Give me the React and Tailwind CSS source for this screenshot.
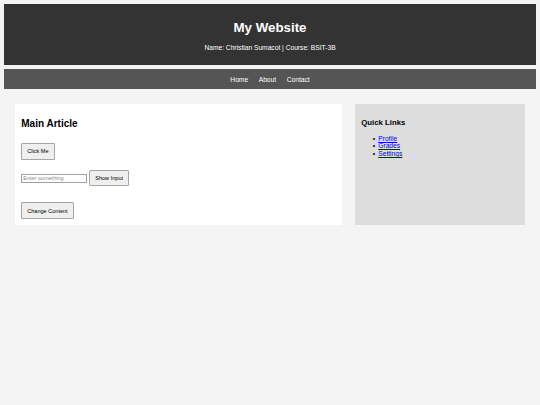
export default function App() {
  const links = ["Profile", "Grades", "Settings"];
  return (
    <div
      className="min-h-screen bg-[#f4f4f4] pt-[4px] text-[6.67px] text-black"
      style={{ fontFamily: '"Liberation Sans", Arial, sans-serif' }}
    >
      <header className="mx-[4px] bg-[#333333] text-white text-center pt-[15.5px] pb-[13.5px]">
        <h1 className="text-[13.33px] font-bold leading-[15.33px]">My Website</h1>
        <p className="mt-[9px] text-[6.67px] leading-[7.67px]">
          Name: Christian Sumacot | Course: BSIT-3B
        </p>
      </header>

      <nav className="mx-[4px] mt-[4.3px] bg-[#555555] py-[6.25px] flex justify-center gap-[10.6px] text-white leading-[7.67px]">
        <a className="text-white">Home</a>
        <a className="text-white">About</a>
        <a className="text-white">Contact</a>
      </nav>

      <div className="mx-[15px] mt-[14.5px] flex gap-[13px] items-stretch">
        <main className="flex-1 bg-white px-[6.25px] pt-[14.5px] pb-[5.5px] flex flex-col items-start">
          <h2 className="text-[10px] font-bold leading-[11.5px]">Main Article</h2>
          <button className="mt-[13px] bg-[#efefef] border border-[#a5a5a5] rounded-[1px] px-[5px] py-[4.5px] text-[5.56px] leading-[6px] text-black">
            Click Me
          </button>
          <div className="mt-[10.5px] flex items-center gap-[2px]">
            <input
              type="text"
              placeholder="Enter something"
              className="h-[9px] w-[66px] bg-white border border-[#a0a0a0] px-[1px] text-[5.56px] leading-[6px] placeholder:text-[#8a8a8a] outline-none"
            />
            <button className="bg-[#efefef] border border-[#a5a5a5] rounded-[1px] px-[5px] py-[4px] text-[5.56px] leading-[6px] text-black">
              Show Input
            </button>
          </div>
          <button className="mt-[16px] bg-[#efefef] border border-[#a5a5a5] rounded-[1px] px-[5px] py-[4.5px] text-[5.56px] leading-[6px] text-black">
            Change Content
          </button>
        </main>

        <aside className="w-[170px] bg-[#dddddd] px-[6.25px] pt-[14px] pb-[6px]">
          <h3 className="text-[7.8px] font-bold leading-[9px]">Quick Links</h3>
          <ul className="mt-[7.8px] pl-[11.5px] leading-[7.67px]">
            {links.map((l) => (
              <li key={l} className="flex items-center">
                <span className="w-[5.5px] text-[6.67px]">•</span>
                <a href="#" className="text-[#0000ee] underline">{l}</a>
              </li>
            ))}
          </ul>
        </aside>
      </div>
    </div>
  );
}
